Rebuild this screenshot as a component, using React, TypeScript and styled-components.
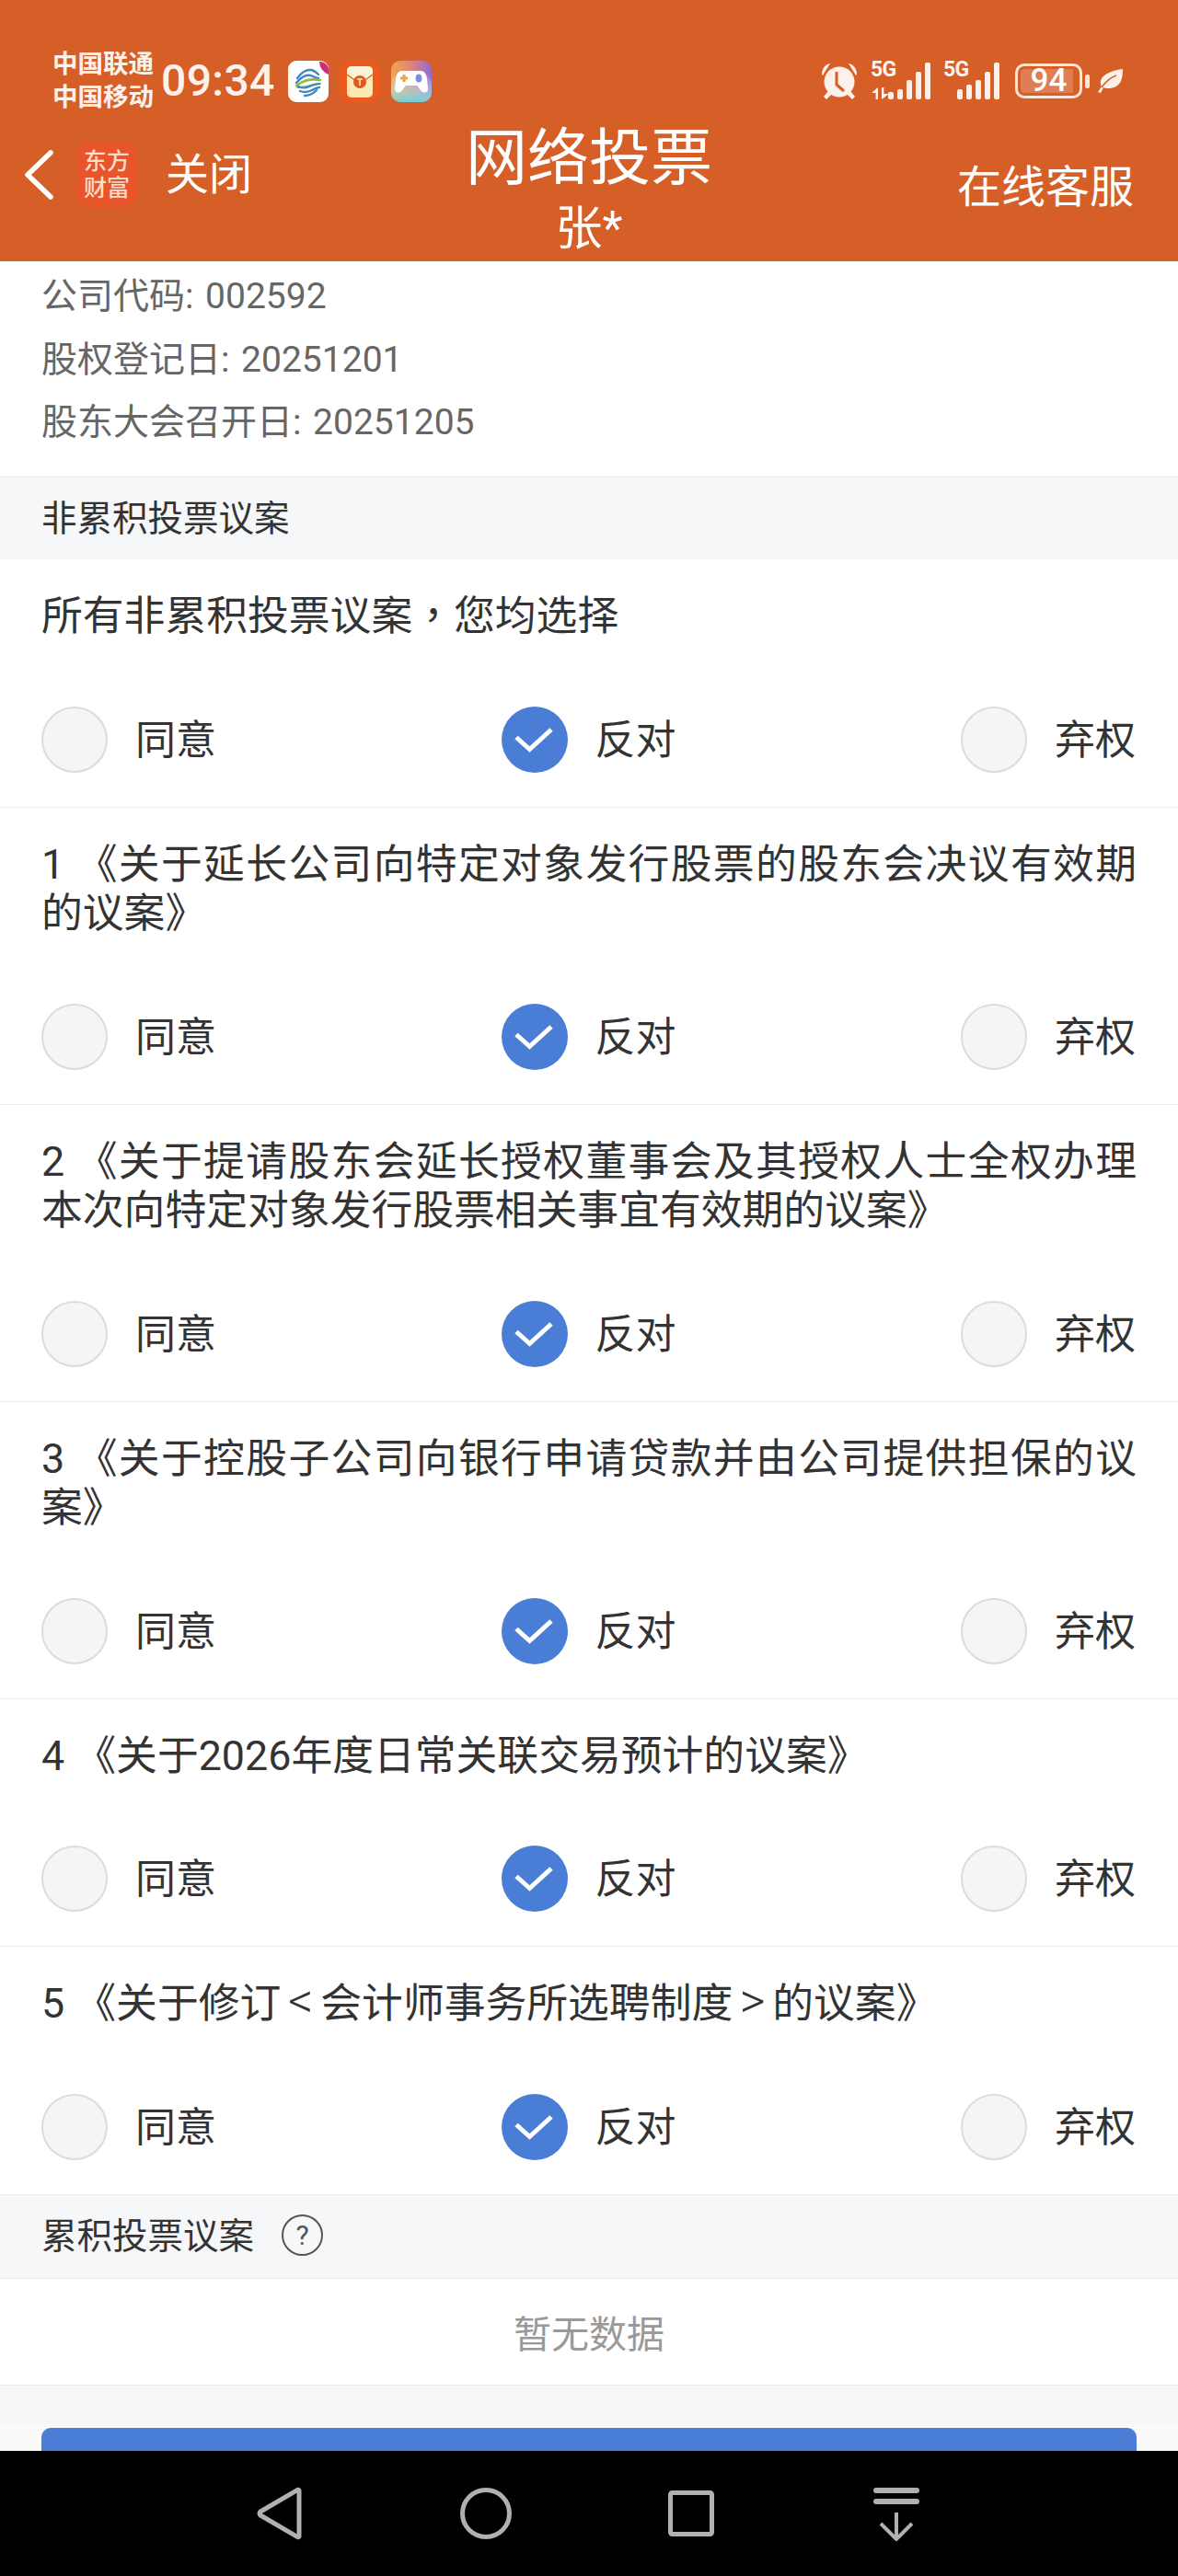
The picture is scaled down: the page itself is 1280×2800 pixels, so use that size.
import React from "react";
import styled, { createGlobalStyle } from "styled-components";

const FONT = `Roboto, "Noto Sans CJK SC", sans-serif`;

const GlobalStyle = createGlobalStyle`
  html, body { margin: 0; padding: 0; background: #fff; }
  * { box-sizing: border-box; }
`;

const Page = styled.div`
  width: 1280px;
  height: 2800px;
  display: flex;
  flex-direction: column;
  overflow: hidden;
  font-family: ${FONT};
  background: #fff;
`;

const Header = styled.header`
  flex: none;
  height: 284px;
  background: #d65f28;
  color: #fff;
`;

const StatusBar = styled.div`
  height: 128px;
  padding: 52px 60px 4px 57px;
  display: flex;
  align-items: center;
  justify-content: space-between;
`;

const StatusGroup = styled.div`
  display: flex;
  align-items: center;
`;

const Carriers = styled.div`
  font-size: 27.5px;
  line-height: 36px;
  font-weight: 700;
  color: #fdf1ea;
  white-space: nowrap;
`;

const Clock = styled.div`
  margin: 0 14px 0 8px;
  font-size: 48px;
  line-height: 56px;
  font-weight: 500;
  color: #fdf1ea;
  letter-spacing: 0.4px;
`;

const AppTile = styled.svg`
  display: block;
  width: 44px;
  height: 45px;
  margin-right: 12px;
`;

const AlarmIcon = styled.svg`
  display: block;
  width: 40px;
  height: 40px;
  margin-right: 14px;
`;

const SignalCluster = styled.div<{ $width: number }>`
  position: relative;
  width: ${(p) => p.$width}px;
  height: 40px;
  margin-right: 14px;
  display: flex;
  justify-content: flex-end;
  align-items: flex-end;
  gap: 4px;
`;

const NetworkTag = styled.span`
  position: absolute;
  left: 0;
  top: -3px;
  font-size: 23px;
  line-height: 22px;
  font-weight: 700;
  letter-spacing: -0.6px;
  color: #fdf1ea;
`;

const TrafficArrows = styled.svg`
  position: absolute;
  left: 1px;
  bottom: 0;
  width: 19px;
  height: 13px;
`;

const SignalBar = styled.span<{ $height: number }>`
  display: block;
  width: 6px;
  height: ${(p) => p.$height}px;
  border-radius: 2px;
  background: #fdf1ea;
`;

const Battery = styled.div`
  width: 73px;
  height: 38px;
  margin-left: 3px;
  padding: 3px;
  border: 3px solid #fbe6da;
  border-radius: 10px;
`;

const BatteryFill = styled.div`
  width: 100%;
  height: 100%;
  border-radius: 4px;
  background: linear-gradient(to right, #e07d52 93%, transparent 93%);
  display: flex;
  align-items: center;
  justify-content: center;
  font-size: 35px;
  line-height: 26px;
  font-weight: 500;
  color: #fff;
`;

const BatteryNub = styled.span`
  display: block;
  width: 5px;
  height: 15px;
  margin: 0 9px 0 3px;
  border-radius: 2px;
  background: #fbe6da;
`;

const LeafIcon = styled.svg`
  display: block;
  width: 27px;
  height: 26px;
`;

const NavBar = styled.nav`
  height: 156px;
  padding: 0 27px;
  display: grid;
  grid-template-columns: 1fr auto 1fr;
`;

const NavLeft = styled.div`
  height: 70px;
  margin-top: 27px;
  display: flex;
  align-items: center;
`;

const BackChevron = styled.svg`
  display: block;
  width: 31px;
  height: 54px;
  margin-right: 25px;
`;

const LogoTile = styled.div`
  width: 66px;
  height: 70px;
  border-radius: 15px;
  background: #e8552a;
  color: #fbdcc8;
  display: flex;
  align-items: center;
  justify-content: center;
  font-size: 25px;
  line-height: 29px;
  font-weight: 500;
  text-align: center;
`;

const CloseLink = styled.span`
  margin-left: 31px;
  font-size: 47px;
  line-height: 56px;
`;

const NavCenter = styled.div`
  padding-top: 11px;
  text-align: center;
`;

const PageTitle = styled.div`
  font-size: 67px;
  line-height: 66px;
`;

const HolderName = styled.div`
  margin-top: 13px;
  font-size: 51px;
  line-height: 62px;
`;

const ServiceLink = styled.div`
  padding: 48px 21px 0 0;
  font-size: 48px;
  line-height: 56px;
  text-align: right;
`;

const MeetingInfo = styled.section`
  padding: 4px 45px 24.5px;
  background: #fff;
  font-size: 39px;
  line-height: 68.5px;
  word-spacing: 3px;
  color: #666;
`;

const Main = styled.main`
  flex: 1;
  min-height: 0;
  overflow: hidden;
  background: #f6f7f9;
`;

const SectionHead = styled.div<{ $ruled?: boolean }>`
  height: 90px;
  padding: 0 45px 8px;
  display: flex;
  align-items: center;
  background: #f6f7f9;
  border-top: ${(p) => (p.$ruled ? "1px solid #ececec" : "none")};
  font-size: 38.5px;
  color: #333;
`;

const HelpBadge = styled.span`
  width: 45px;
  height: 45px;
  margin: 6px 0 0 30px;
  border: 2px solid #555;
  border-radius: 50%;
  display: flex;
  align-items: center;
  justify-content: center;
  font-size: 30px;
  line-height: 1;
  color: #555;
`;

const VoteRow = styled.div`
  padding: 35px 45px 37px;
  background: #fff;
  border-bottom: 1px solid #ececec;
`;

const Proposal = styled.div`
  font-size: 44.8px;
  line-height: 53.5px;
  color: #333;
  text-align: justify;
`;

const CenteredComma = styled.span`
  font-family: "Noto Sans CJK TC", sans-serif;
  line-height: 0;
`;

const AngleMark = styled.span`
  display: inline-block;
  width: 0.8em;
  font-size: 1.2em;
  font-weight: 300;
  line-height: 0;
  text-align: center;
`;

const Choices = styled.div`
  margin-top: 71px;
  display: flex;
  justify-content: space-between;
`;

const Choice = styled.div`
  display: flex;
  align-items: center;
  gap: 30px;
  width: 191px;
  height: 72px;
  font-size: 44px;
  color: #333;
`;

const ChoiceLabel = styled.span`
  padding-bottom: 6px;
`;

const Radio = styled.span<{ $checked?: boolean }>`
  flex: none;
  width: 72px;
  height: 72px;
  border-radius: 50%;
  background: ${(p) => (p.$checked ? "#4a7dd6" : "#f5f5f5")};
  border: ${(p) => (p.$checked ? "none" : "2px solid #dcdcdc")};
  display: block;
`;

const CheckMark = styled.svg`
  display: block;
  width: 72px;
  height: 72px;
`;

const EmptyState = styled.div`
  height: 117px;
  background: #fff;
  border-top: 1px solid #ececec;
  border-bottom: 1px solid #ececec;
  display: flex;
  align-items: center;
  justify-content: center;
  font-size: 41px;
  color: #999;
`;

const Footer = styled.div`
  margin-top: 44px;
  padding: 2px 45px 0;
  background: #fafafa;
`;

const SubmitButton = styled.div`
  height: 100px;
  border-radius: 10px;
  background: #4a7dd6;
`;

const SystemBar = styled.div`
  flex: none;
  height: 136px;
  background: #000;
  padding-right: 2px;
  display: flex;
  align-items: center;
  justify-content: center;
`;

const SystemKey = styled.div`
  width: 223px;
  display: flex;
  justify-content: center;
`;

const SystemIcon = styled.svg`
  display: block;
  width: 60px;
  height: 60px;
  fill: none;
  stroke: #b0b0b0;
  stroke-width: 5;
`;

const options = ["同意", "反对", "弃权"];

const proposals: { id: string; body: React.ReactNode }[] = [
  {
    id: "all",
    body: (
      <>
        所有非累积投票议案<CenteredComma>，</CenteredComma>您均选择
      </>
    ),
  },
  { id: "1", body: "1 《关于延长公司向特定对象发行股票的股东会决议有效期的议案》" },
  { id: "2", body: "2 《关于提请股东会延长授权董事会及其授权人士全权办理本次向特定对象发行股票相关事宜有效期的议案》" },
  { id: "3", body: "3 《关于控股子公司向银行申请贷款并由公司提供担保的议案》" },
  { id: "4", body: "4 《关于2026年度日常关联交易预计的议案》" },
  {
    id: "5",
    body: (
      <>
        5 《关于修订<AngleMark>{"<"}</AngleMark>会计师事务所选聘制度<AngleMark>{">"}</AngleMark>的议案》
      </>
    ),
  },
];

const ChinaMobileTile = () => (
  <AppTile viewBox="0 0 44 45">
    <rect width="44" height="45" rx="9" fill="#fff" />
    <path d="M34 1h1a9 9 0 0 1 9 9v5a15 15 0 0 1-10-14z" fill="#d02a78" />
    <g fill="none" strokeLinecap="round">
      <path d="M10 19c5-7 11-9 14-9s6 2 9 5" stroke="#3f86c2" strokeWidth="2.4" />
      <path d="M9 24c6-7 11-9 15-8s6 3 9 3" stroke="#3f86c2" strokeWidth="2.4" />
      <path d="M9 27c7-5 14-8 26-6" stroke="#8fbe3e" strokeWidth="2.6" />
      <path d="M10 29c8 0 16-3 25-4" stroke="#8fbe3e" strokeWidth="2.2" />
      <path d="M11 28c4 2 8 2 12 0s8-3 11-3" stroke="#3f86c2" strokeWidth="2.2" />
      <path d="M13 33c5 2 9 1 13-1s6-3 8-3" stroke="#3f86c2" strokeWidth="2.4" />
      <path d="M18 38c5 0 9-2 13-6" stroke="#3f86c2" strokeWidth="2.4" />
    </g>
  </AppTile>
);

const EnvelopeTile = () => (
  <AppTile viewBox="0 0 44 45">
    <rect width="44" height="45" rx="10" fill="#ea5a1e" />
    <rect x="8" y="6" width="28" height="34" rx="5" fill="#fdeab0" />
    <path d="M8 15l14 10 14-10v-4a5 5 0 0 0-5-5H13a5 5 0 0 0-5 5z" fill="#fdf3d6" />
    <path d="M8 15l14 10 14-10" fill="none" stroke="#d9662b" strokeWidth="1.4" />
    <circle cx="22" cy="23" r="7" fill="#e0581f" />
    <path d="M19 20h6M22 20v7" stroke="#fde6a6" strokeWidth="1.6" />
  </AppTile>
);

const GameTile = () => (
  <AppTile viewBox="0 0 44 45">
    <defs>
      <linearGradient id="gameTop" x1="0" y1="0" x2="1" y2="0">
        <stop offset="0" stopColor="#f0a64f" />
        <stop offset="0.55" stopColor="#d9827e" />
        <stop offset="1" stopColor="#8d6ad8" />
      </linearGradient>
      <linearGradient id="gameBottom" x1="0" y1="0" x2="0" y2="1">
        <stop offset="0" stopColor="#ffffff" stopOpacity="0" />
        <stop offset="1" stopColor="#6fcfd2" />
      </linearGradient>
    </defs>
    <rect width="44" height="45" rx="10" fill="url(#gameTop)" />
    <rect y="14" width="44" height="31" rx="10" fill="url(#gameBottom)" />
    <path d="M12 11h20c4 0 6 3 7 8l1 12c0 4-5 5-8 1l-4-5H16l-4 5c-3 4-8 3-8-1l1-12c1-5 3-8 7-8z" fill="#fff" />
    <path d="M14 15v8M10 19h8" stroke="#f0a24a" strokeWidth="3" />
    <ellipse cx="30" cy="19" rx="3.4" ry="4.6" fill="#7d8fe0" />
  </AppTile>
);

const Alarm = () => (
  <AlarmIcon viewBox="0 0 40 40">
    <path d="M1 13C1 6 5 2 10 1L2 14zM39 13c0-7-4-11-9-12l8 13z" fill="#fdf1ea" />
    <path d="M8 31l-5 6 3 3 6-6zM32 31l5 6-3 3-6-6z" fill="#fdf1ea" />
    <circle cx="20" cy="21" r="16.5" fill="#fdf1ea" />
    <path d="M17 10v14l8 7" fill="none" stroke="#d65f28" strokeWidth="3" />
  </AlarmIcon>
);

const Leaf = () => (
  <LeafIcon viewBox="0 0 27 26">
    <path d="M27 0c0 12-3 20-14 21-3 0-6 0-7-1L3 26 0 25l4-6C-1 10 10 2 27 0z" fill="#fdf1ea" />
    <path d="M4 20C9 13 14 9 20 7" stroke="#d65f28" strokeWidth="1.6" fill="none" />
  </LeafIcon>
);

export default function App() {
  return (
    <>
      <GlobalStyle />
      <Page>
        <Header>
          <StatusBar>
            <StatusGroup>
              <Carriers>
                中国联通
                <br />
                中国移动
              </Carriers>
              <Clock>09:34</Clock>
              <ChinaMobileTile />
              <EnvelopeTile />
              <GameTile />
            </StatusGroup>
            <StatusGroup>
              <Alarm />
              <SignalCluster $width={65}>
                <NetworkTag>5G</NetworkTag>
                <TrafficArrows viewBox="0 0 19 13">
                  <path d="M7 0v13H4.6V6H0zM11 13V0h2.4v7H19z" fill="#fdf1ea" />
                </TrafficArrows>
                {[8, 11, 21, 30, 40].map((h, i) => (
                  <SignalBar key={i} $height={h} />
                ))}
              </SignalCluster>
              <SignalCluster $width={61}>
                <NetworkTag>5G</NetworkTag>
                {[11, 16, 21, 30, 40].map((h, i) => (
                  <SignalBar key={i} $height={h} />
                ))}
              </SignalCluster>
              <Battery>
                <BatteryFill>94</BatteryFill>
              </Battery>
              <BatteryNub />
              <Leaf />
            </StatusGroup>
          </StatusBar>
          <NavBar>
            <NavLeft>
              <BackChevron viewBox="0 0 31 54">
                <path d="M28 3L3 27l25 24" fill="none" stroke="#fff" strokeWidth="5.5" strokeLinecap="round" strokeLinejoin="round" />
              </BackChevron>
              <LogoTile>
                东方
                <br />
                财富
              </LogoTile>
              <CloseLink>关闭</CloseLink>
            </NavLeft>
            <NavCenter>
              <PageTitle>网络投票</PageTitle>
              <HolderName>张*</HolderName>
            </NavCenter>
            <ServiceLink>在线客服</ServiceLink>
          </NavBar>
        </Header>
        <Main>
          <MeetingInfo>
            公司代码: 002592
            <br />
            股权登记日: 20251201
            <br />
            股东大会召开日: 20251205
          </MeetingInfo>
          <SectionHead $ruled>非累积投票议案</SectionHead>
          {proposals.map(({ id, body }) => (
            <VoteRow key={id}>
              <Proposal>{body}</Proposal>
              <Choices>
                {options.map((label) => (
                  <Choice key={label}>
                    <Radio $checked={label === "反对"}>
                      {label === "反对" && (
                        <CheckMark viewBox="0 0 72 72">
                          <path d="M16 33.5l14.5 13L54 25" fill="none" stroke="#fff" strokeWidth="5" />
                        </CheckMark>
                      )}
                    </Radio>
                    <ChoiceLabel>{label}</ChoiceLabel>
                  </Choice>
                ))}
              </Choices>
            </VoteRow>
          ))}
          <SectionHead>
            累积投票议案
            <HelpBadge>?</HelpBadge>
          </SectionHead>
          <EmptyState>暂无数据</EmptyState>
          <Footer>
            <SubmitButton />
          </Footer>
        </Main>
        <SystemBar>
          <SystemKey>
            <SystemIcon viewBox="0 0 60 60">
              <path d="M50 5v50a1 1 0 0 1-1.600.6L8 32a3 3 0 0 1 0-4L48.400 4.400A1 1 0 0 1 50 5z" strokeLinejoin="round" />
            </SystemIcon>
          </SystemKey>
          <SystemKey>
            <SystemIcon viewBox="0 0 60 60">
              <circle cx="30" cy="30" r="25.500" />
            </SystemIcon>
          </SystemKey>
          <SystemKey>
            <SystemIcon viewBox="0 0 60 60">
              <rect x="7.500" y="7.500" width="45" height="45" rx="2" />
            </SystemIcon>
          </SystemKey>
          <SystemKey>
            <SystemIcon viewBox="0 0 60 60">
              <path d="M8 5h44M8 17h44" strokeWidth="6" strokeLinecap="round" />
              <path d="M30 29v28M13 41l17 17 17-17" strokeWidth="4" />
            </SystemIcon>
          </SystemKey>
        </SystemBar>
      </Page>
    </>
  );
}
